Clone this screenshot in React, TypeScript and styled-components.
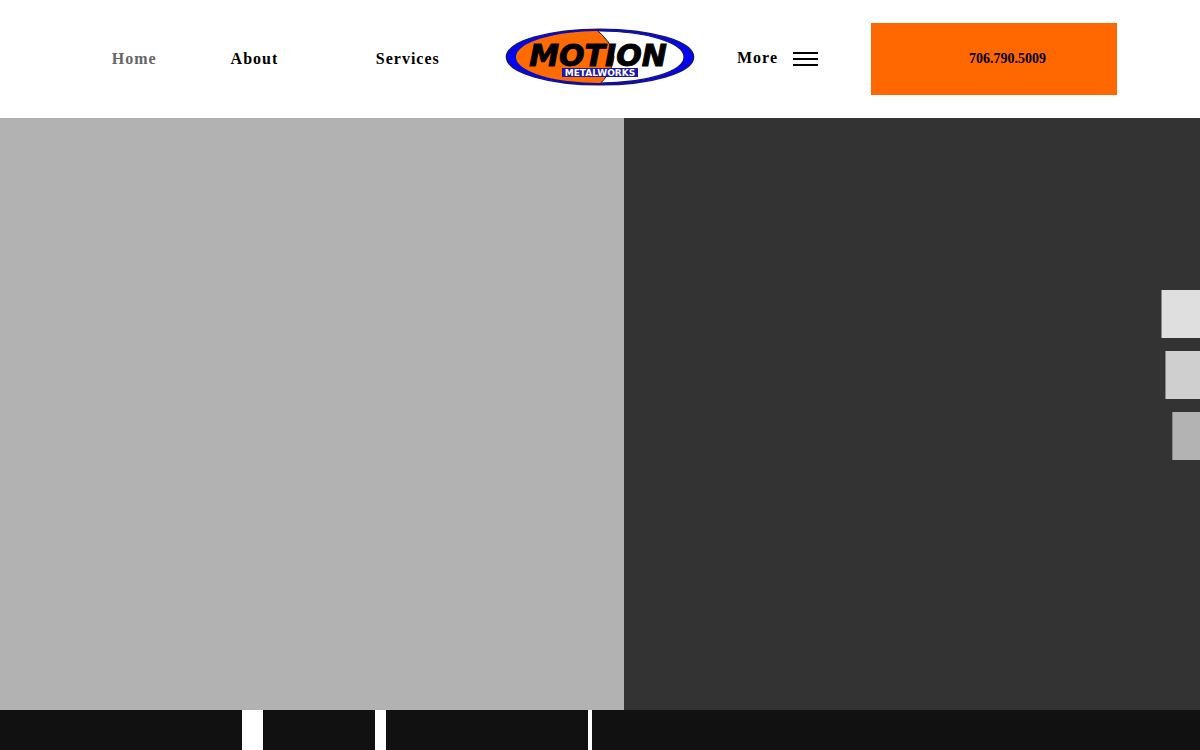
import React from 'react';
import styled, { createGlobalStyle } from 'styled-components';

const GlobalStyle = createGlobalStyle`
  *, *::before, *::after { box-sizing: border-box; }
  body {
    margin: 0;
    background: #fff;
    color: #000;
    font-family: "Liberation Serif", "Times New Roman", serif;
  }
`;

const Page = styled.div`
  display: flex;
  flex-direction: column;
  min-height: 100vh;
`;

const Header = styled.header`
  display: grid;
  grid-template-columns: 1fr 190px 1fr;
  align-items: center;
  height: 118px;
  background: #fff;
`;

const Nav = styled.nav`
  display: grid;
  grid-template-columns: 120fr 120fr 186fr;
  justify-items: center;
  padding: 0 4px 0 74px;
`;

const NavLink = styled.a<{ $current?: boolean }>`
  color: ${({ $current }) => ($current ? '#666' : '#000')};
  font-size: 16px;
  font-weight: 700;
  line-height: 24px;
  letter-spacing: 1px;
  text-decoration: none;
`;

const LogoLink = styled.a`
  display: block;
  height: 64px;
`;

const Actions = styled.div`
  display: flex;
  align-items: center;
  justify-content: space-between;
  padding: 0 83px 0 42px;
`;

const MenuButton = styled.button`
  display: flex;
  align-items: center;
  gap: 15px;
  padding: 0;
  border: 0;
  background: none;
  color: #000;
  font: 700 16px/24px "Liberation Serif", "Times New Roman", serif;
  letter-spacing: 1px;
  cursor: pointer;
`;

const MenuLabel = styled.span`
  padding-bottom: 2px;
`;

const MenuBars = styled.span`
  display: grid;
  gap: 4px;
  width: 25px;
`;

const Bar = styled.span`
  height: 2px;
  background: #000;
`;

const PhoneLink = styled.a`
  display: flex;
  align-items: center;
  justify-content: center;
  width: 246px;
  height: 72px;
  padding-left: 27px;
  background: #ff6700;
  color: #000;
  font-size: 14px;
  font-weight: 700;
  line-height: 20px;
  text-decoration: none;
`;

const Hero = styled.main`
  display: grid;
  grid-template-columns: 52% 48%;
  flex: 1;
  min-height: 400px;
`;

const Panel = styled.section<{ $dark?: boolean }>`
  background: ${({ $dark }) => ($dark ? '#333' : '#b2b2b2')};
`;

const SideTabs = styled.aside`
  position: fixed;
  right: 0;
  top: 50%;
  transform: translateY(-50%);
  display: flex;
  flex-direction: column;
  align-items: flex-end;
  gap: 13px;
`;

const SideTab = styled.button<{ $width: number; $tone: string }>`
  width: ${({ $width }) => $width}px;
  height: 48px;
  padding: 0;
  border: 0;
  border-left: 1px solid #888;
  background: ${({ $tone }) => $tone};
`;

const Strip = styled.footer`
  display: grid;
  grid-template-columns: 242fr 21fr 112fr 11fr 202fr 4fr 608fr;
  height: 40px;
`;

const Tile = styled.div<{ $gap?: boolean }>`
  background: ${({ $gap }) => ($gap ? '#fff' : '#111')};
`;

const LogoName = styled.text`
  font: italic 700 30px "DejaVu Sans", sans-serif;
  stroke: #000;
  stroke-width: 1px;
`;

const LogoTag = styled.text`
  font: 700 9px "DejaVu Sans", sans-serif;
  fill: #fff;
`;

function Logo() {
  return (
    <svg width="190" height="60" viewBox="0 0 190 60" role="img" aria-label="Motion Metalworks">
      <defs>
        <clipPath id="inner">
          <ellipse cx="95" cy="30" rx="84" ry="26" />
        </clipPath>
      </defs>
      <ellipse cx="95" cy="30" rx="93.5" ry="27.8" fill="#0505f0" stroke="#15157a" strokeWidth="1.6" />
      <ellipse cx="95" cy="30" rx="84" ry="26" fill="#fff" stroke="#15157a" strokeWidth="1.2" />
      <path
        d="M0 0H88Q108 15 109 30Q108 45 92 60H0Z"
        fill="#ff6b00"
        stroke="#2b1a10"
        strokeWidth="1"
        clipPath="url(#inner)"
      />
      <LogoName x="93" y="39" textAnchor="middle">MOTION</LogoName>
      <rect x="57" y="41" width="76" height="9" fill="#1a1ab0" />
      <LogoTag x="95" y="49" textAnchor="middle">METALWORKS</LogoTag>
    </svg>
  );
}

const tabs = [
  { label: 'Call', width: 39, tone: '#dfdfdf' },
  { label: 'Email', width: 35, tone: '#cfcfcf' },
  { label: 'Directions', width: 28, tone: '#b3b3b3' },
];

export default function App() {
  return (
    <Page>
      <GlobalStyle />
      <Header>
        <Nav>
          <NavLink href="#home" $current aria-current="page">Home</NavLink>
          <NavLink href="#about">About</NavLink>
          <NavLink href="#services">Services</NavLink>
        </Nav>
        <LogoLink href="#home">
          <Logo />
        </LogoLink>
        <Actions>
          <MenuButton type="button">
            <MenuLabel>More</MenuLabel>
            <MenuBars>
              <Bar />
              <Bar />
              <Bar />
            </MenuBars>
          </MenuButton>
          <PhoneLink href="tel:7067905009">706.790.5009</PhoneLink>
        </Actions>
      </Header>
      <Hero>
        <Panel />
        <Panel $dark />
      </Hero>
      <SideTabs>
        {tabs.map((tab) => (
          <SideTab key={tab.label} type="button" aria-label={tab.label} $width={tab.width} $tone={tab.tone} />
        ))}
      </SideTabs>
      <Strip>
        <Tile />
        <Tile $gap />
        <Tile />
        <Tile $gap />
        <Tile />
        <Tile $gap />
        <Tile />
      </Strip>
    </Page>
  );
}
